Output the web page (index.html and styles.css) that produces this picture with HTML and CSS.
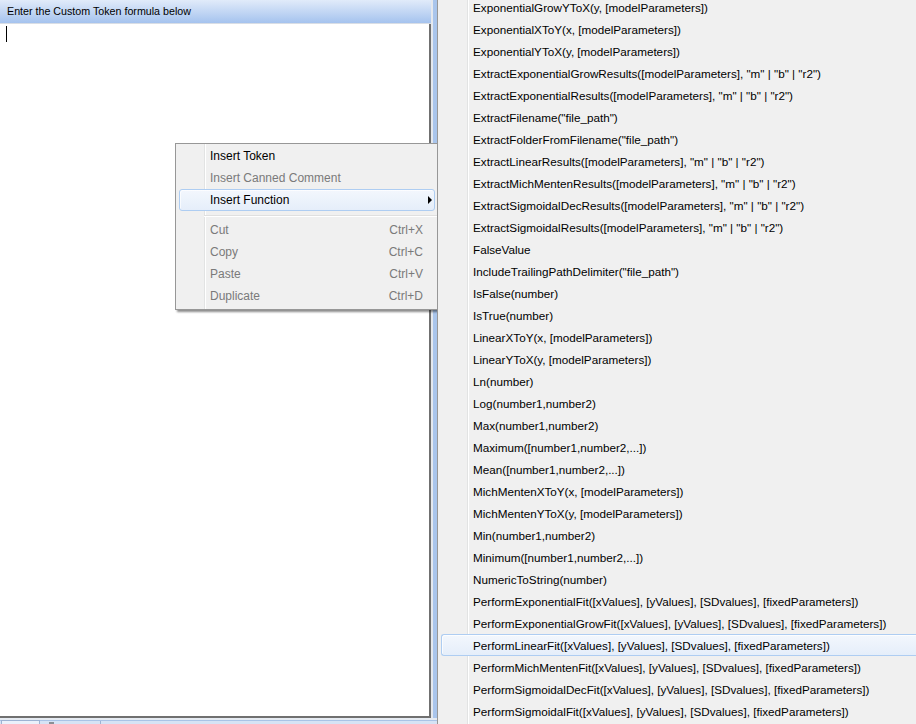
FILE: index.html
```html
<!DOCTYPE html>
<html>
<head>
<meta charset="utf-8">
<title>Custom Token</title>
<link rel="stylesheet" href="styles.css">
</head>
<body>
<div class="screen">
  <div class="left">
    <div class="content">
      <div class="header">Enter the Custom Token formula below</div>
      <div class="editor"><span class="caret"></span></div>
    </div>
    <div class="vstrip"></div>
    <div class="tabbar"><span class="tab"></span><span class="tabmark"></span><span class="tabdiv"></span></div>
  </div>

  <div class="submenu">
    <ul class="items">
      <li class="item">ExponentialGrowYToX(y, [modelParameters])</li>
      <li class="item">ExponentialXToY(x, [modelParameters])</li>
      <li class="item">ExponentialYToX(y, [modelParameters])</li>
      <li class="item">ExtractExponentialGrowResults([modelParameters], "m" | "b" | "r2")</li>
      <li class="item">ExtractExponentialResults([modelParameters], "m" | "b" | "r2")</li>
      <li class="item">ExtractFilename("file_path")</li>
      <li class="item">ExtractFolderFromFilename("file_path")</li>
      <li class="item">ExtractLinearResults([modelParameters], "m" | "b" | "r2")</li>
      <li class="item">ExtractMichMentenResults([modelParameters], "m" | "b" | "r2")</li>
      <li class="item">ExtractSigmoidalDecResults([modelParameters], "m" | "b" | "r2")</li>
      <li class="item">ExtractSigmoidalResults([modelParameters], "m" | "b" | "r2")</li>
      <li class="item">FalseValue</li>
      <li class="item">IncludeTrailingPathDelimiter("file_path")</li>
      <li class="item">IsFalse(number)</li>
      <li class="item">IsTrue(number)</li>
      <li class="item">LinearXToY(x, [modelParameters])</li>
      <li class="item">LinearYToX(y, [modelParameters])</li>
      <li class="item">Ln(number)</li>
      <li class="item">Log(number1,number2)</li>
      <li class="item">Max(number1,number2)</li>
      <li class="item">Maximum([number1,number2,...])</li>
      <li class="item">Mean([number1,number2,...])</li>
      <li class="item">MichMentenXToY(x, [modelParameters])</li>
      <li class="item">MichMentenYToX(y, [modelParameters])</li>
      <li class="item">Min(number1,number2)</li>
      <li class="item">Minimum([number1,number2,...])</li>
      <li class="item">NumericToString(number)</li>
      <li class="item">PerformExponentialFit([xValues], [yValues], [SDvalues], [fixedParameters])</li>
      <li class="item">PerformExponentialGrowFit([xValues], [yValues], [SDvalues], [fixedParameters])</li>
      <li class="item hot">PerformLinearFit([xValues], [yValues], [SDvalues], [fixedParameters])</li>
      <li class="item">PerformMichMentenFit([xValues], [yValues], [SDvalues], [fixedParameters])</li>
      <li class="item">PerformSigmoidalDecFit([xValues], [yValues], [SDvalues], [fixedParameters])</li>
      <li class="item">PerformSigmoidalFit([xValues], [yValues], [SDvalues], [fixedParameters])</li>
    </ul>
  </div>

  <div class="ctxmenu">
    <div class="citem"><span>Insert Token</span></div>
    <div class="citem disabled"><span>Insert Canned Comment</span></div>
    <div class="citem hot"><span>Insert Function</span><span class="arrow"></span></div>
    <div class="sep"></div>
    <div class="citem disabled"><span>Cut</span><span class="key">Ctrl+X</span></div>
    <div class="citem disabled"><span>Copy</span><span class="key">Ctrl+C</span></div>
    <div class="citem disabled"><span>Paste</span><span class="key">Ctrl+V</span></div>
    <div class="citem disabled"><span>Duplicate</span><span class="key">Ctrl+D</span></div>
  </div>
</div>
</body>
</html>
```

FILE: styles.css
```css
html, body {
  margin: 0;
  padding: 0;
  background: #f0f0f0;
}

.screen {
  position: relative;
  display: flex;
  width: 916px;
  height: 724px;
  overflow: hidden;
  font-family: "Liberation Sans", Arial, sans-serif;
}

/* ---------- left pane ---------- */
.left {
  flex: none;
  width: 437px;
  display: grid;
  grid-template-columns: 431px 6px;
  grid-template-rows: 1fr 6px;
  background: #f0f0f0;
}

.content {
  display: flex;
  flex-direction: column;
  min-height: 0;
}

.header {
  height: 24px;
  box-sizing: border-box;
  padding-left: 7px;
  line-height: 22px;
  font-size: 10.7px;
  color: #000;
  background: linear-gradient(#e1ebfa, #a5c3ee);
  border-bottom: 1px solid #d9dee5;
}

.editor {
  flex: 1;
  background: #fff;
  border-right: 2px solid #707070;
  border-bottom: 2px solid #707070;
}

.caret {
  display: block;
  width: 1px;
  height: 16px;
  margin: 2px 0 0 6px;
  background: #000;
}

.vstrip {
  background: linear-gradient(to right, #e4e8ee 0, #e4e8ee 2px, #a9c5ec 2px);
}

.tabbar {
  grid-column: 1 / 3;
  display: flex;
  align-items: flex-end;
  background: linear-gradient(#e6ebf2 0, #e6ebf2 2px, #a9c3e6 2px, #a9c3e6 3px, #d6e3f5 3px);
}

.tab {
  width: 39px;
  height: 4px;
  margin-left: 1px;
  box-sizing: border-box;
  border: 1px solid #9db3d3;
  border-bottom: 0;
  background: #eaf1fb;
}

.tabmark {
  width: 5px;
  height: 2px;
  margin-left: 9px;
  background: #8a8f96;
}

.tabdiv {
  width: 1px;
  height: 3px;
  margin-left: 46px;
  background: #9db3d3;
}

/* ---------- submenu ---------- */
.submenu {
  flex: none;
  position: relative;
  z-index: 2;
  width: 520px;
  border-left: 1px solid #979797;
  background:
    linear-gradient(to right, transparent 29px, #e2e3e3 29px, #e2e3e3 30px, #ffffff 30px, #ffffff 31px, transparent 31px),
    #f0f0f0;
  overflow: hidden;
}

.items {
  list-style: none;
  margin: -4px 0 0 0;
  padding: 0;
}

.item {
  height: 22px;
  box-sizing: border-box;
  margin-left: 3px;
  padding-left: 31px;
  border: 1px solid transparent;
  border-right: 0;
  line-height: 21px;
  font-size: 11.7px;
  color: #000;
  white-space: nowrap;
}

.item.hot {
  border-color: #aecdf2;
  border-radius: 3px 0 0 3px;
  background: linear-gradient(#f3f7fd, #e5eefa);
  box-shadow: inset 1px 1px 0 rgba(255, 255, 255, 0.7);
}

/* ---------- context menu ---------- */
.ctxmenu {
  position: absolute;
  z-index: 1;
  left: 175px;
  top: 143px;
  width: 263px;
  box-sizing: border-box;
  padding: 1px 0 2px 0;
  border: 1px solid #979797;
  background:
    linear-gradient(to right, transparent 28px, #e2e3e3 28px, #e2e3e3 29px, #ffffff 29px, #ffffff 30px, transparent 30px),
    #f0f0f0;
  box-shadow: 2px 2px 2px rgba(0, 0, 0, 0.45);
  font-size: 12px;
}

.citem {
  display: flex;
  align-items: center;
  justify-content: space-between;
  height: 22px;
  box-sizing: border-box;
  margin: 0 2px 0 3px;
  padding: 0 2px 0 30px;
  border: 1px solid transparent;
  color: #000;
  white-space: nowrap;
}

.citem.disabled {
  color: #7a7a7a;
}

.citem.hot {
  border-color: #aecdf2;
  border-radius: 3px;
  background: linear-gradient(#f3f7fd, #e5eefa);
  box-shadow: inset 1px 1px 0 rgba(255, 255, 255, 0.7);
}

.key {
  padding-right: 9px;
}

.arrow {
  width: 0;
  height: 0;
  border-top: 4px solid transparent;
  border-bottom: 4px solid transparent;
  border-left: 4px solid #000;
}

.sep {
  height: 8px;
  margin-left: 28px;
  background: linear-gradient(transparent 4px, #e0e0e0 4px, #e0e0e0 5px, #ffffff 5px, #ffffff 6px, transparent 6px);
}
```
